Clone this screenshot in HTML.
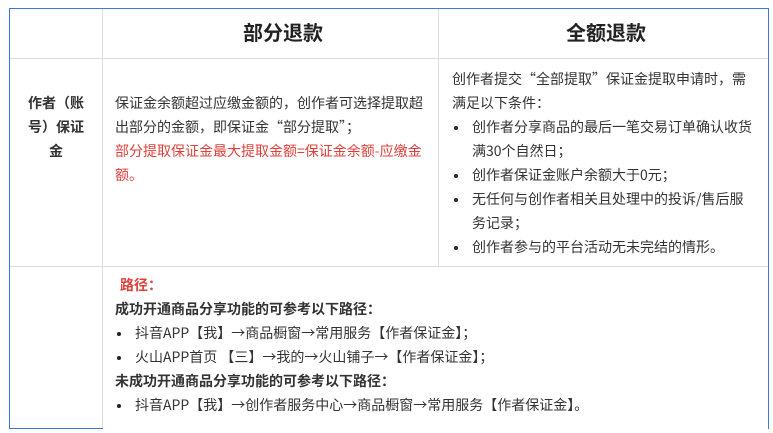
<!DOCTYPE html>
<html><head><meta charset="utf-8"><style>
body{margin:0;background:#fff;font-family:"Noto Sans CJK SC","Liberation Sans",sans-serif;font-size:14px;color:#333;}
.b{position:absolute;}
.t{position:absolute;line-height:24px;}
ul{margin:0;padding:0;list-style:none;}
li{position:relative;padding-left:20px;}
li:before{content:"";position:absolute;left:2px;top:11px;width:4px;height:4px;border-radius:2px;background:#222;}
</style></head><body>
<div class="b" style="left:9px;top:8px;width:760px;height:1px;background:#3b78e7"></div>
<div class="b" style="left:9px;top:8px;width:1px;height:421px;background:#3b78e7"></div>
<div class="b" style="left:768px;top:8px;width:1px;height:421px;background:#3b78e7"></div>
<div class="b" style="left:9px;top:428px;width:94px;height:1px;background:#3b78e7"></div>
<div class="b" style="left:10px;top:58px;width:758px;height:1px;background:#ddd"></div>
<div class="b" style="left:10px;top:266px;width:758px;height:1px;background:#ddd"></div>
<div class="b" style="left:102px;top:9px;width:1px;height:419px;background:#ddd"></div>
<div class="b" style="left:438px;top:9px;width:1px;height:257px;background:#ddd"></div>

<div class="t" style="left:243px;top:20px;font-size:20px;font-weight:bold;color:#222;">部分退款</div>
<div class="t" style="left:566px;top:20px;font-size:20px;font-weight:bold;color:#222;">全额退款</div>

<div class="t" style="left:10px;width:92px;top:91px;text-align:center;font-weight:bold;color:#333;">作者（账<br>号）保证<br>金</div>

<div class="t" style="left:115px;top:91px;width:312px;">保证金余额超过应缴金额的，创作者可选择提取超出部分的金额，即保证金“部分提取”；<br><span style="color:#e0403a">部分提取保证金最大提取金额=保证金余额-应缴金额。</span></div>

<div class="t" style="left:452px;top:67px;width:304px;">创作者提交“全部提取”保证金提取申请时，需满足以下条件：
<ul><li>创作者分享商品的最后一笔交易订单确认收货满30个自然日；</li><li>创作者保证金账户余额大于0元；</li><li>无任何与创作者相关且处理中的投诉/售后服务记录；</li><li>创作者参与的平台活动无未完结的情形。</li></ul></div>

<div class="t" style="left:115px;top:273px;width:640px;">
<div style="color:#e0403a;font-weight:bold;padding-left:5px;">路径：</div>
<div style="font-weight:bold;">成功开通商品分享功能的可参考以下路径：</div>
<ul><li>抖音APP【我】→商品橱窗→常用服务【作者保证金】；</li><li>火山APP首页 【三】→我的→火山铺子→【作者保证金】；</li></ul>
<div style="font-weight:bold;">未成功开通商品分享功能的可参考以下路径：</div>
<ul><li>抖音APP【我】→创作者服务中心→商品橱窗→常用服务【作者保证金】。</li></ul>
</div>
</body></html>
